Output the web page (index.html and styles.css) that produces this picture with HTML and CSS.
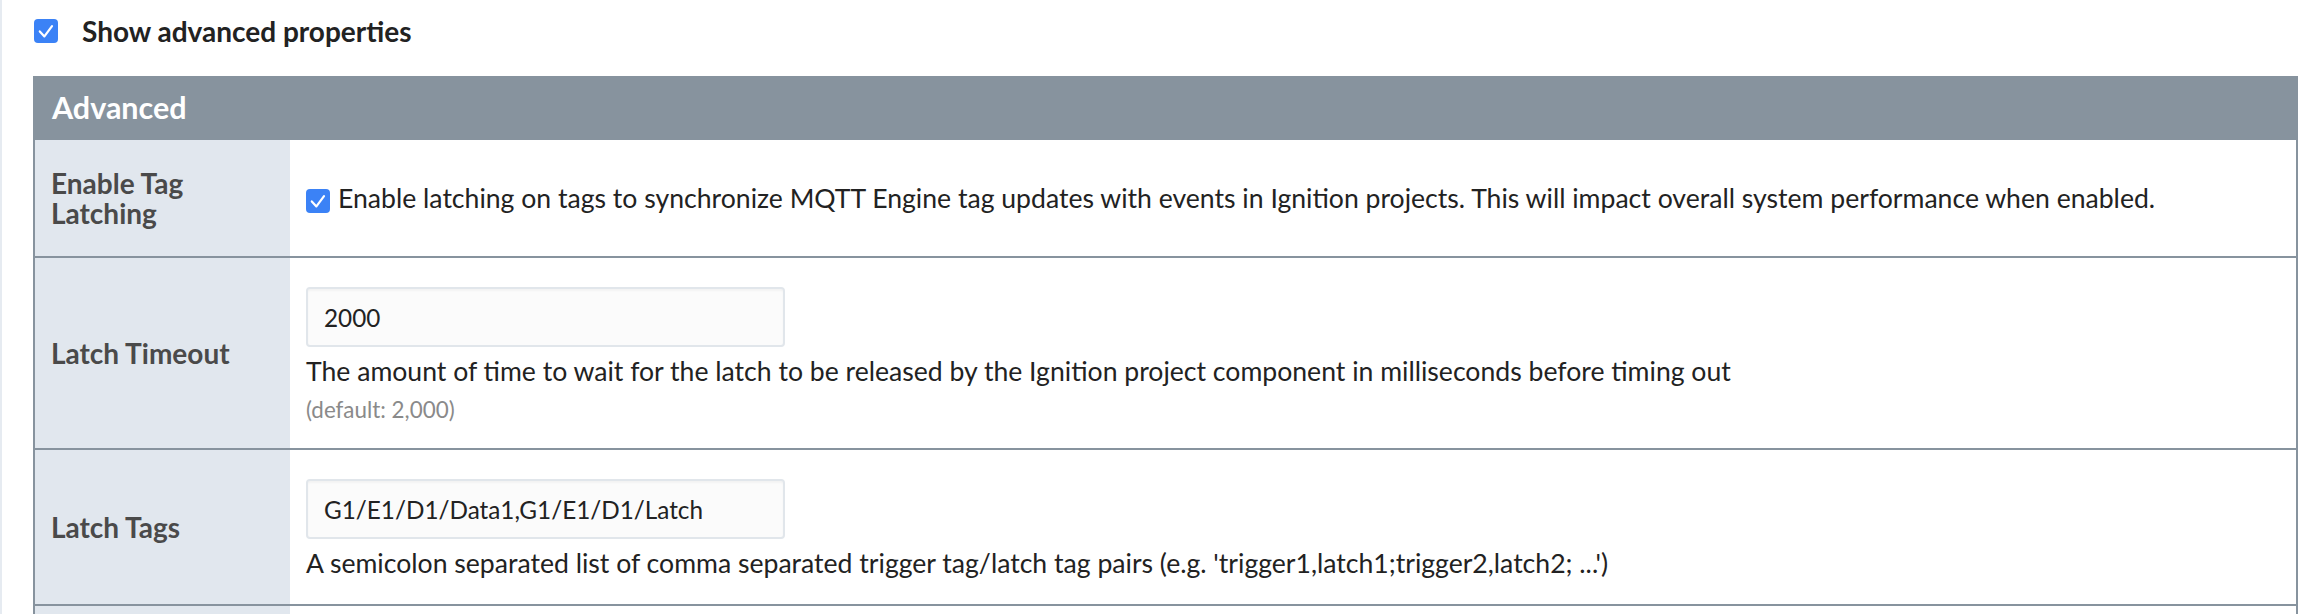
FILE: index.html
```html
<!DOCTYPE html>
<html lang="en">
<head>
<meta charset="utf-8">
<title>Advanced properties</title>
<link rel="stylesheet" href="styles.css">
</head>
<body>
<div class="page">
  <label class="toggle">
    <svg class="cb" viewBox="0 0 24 24" width="24" height="24" aria-hidden="true"><rect width="24" height="24" rx="4" fill="#3b82f6"/><path d="M5.8 12.4 L10.4 17.4 L18 7.2" fill="none" stroke="#fff" stroke-width="2.2" stroke-linecap="round" stroke-linejoin="round"/></svg>
    <span>Show advanced properties</span>
  </label>

  <section class="panel">
    <header class="panel-head">Advanced</header>

    <div class="row">
      <div class="label label-tall">Enable Tag<br>Latching</div>
      <div class="value value-inline">
        <svg class="cb cb-inline" viewBox="0 0 24 24" width="24" height="24" aria-hidden="true"><rect width="24" height="24" rx="4" fill="#3b82f6"/><path d="M5.8 12.4 L10.4 17.4 L18 7.2" fill="none" stroke="#fff" stroke-width="2.2" stroke-linecap="round" stroke-linejoin="round"/></svg>
        <span>Enable latching on tags to synchronize MQTT Engine tag updates with events in Ignition projects. This will impact overall system performance when enabled.</span>
      </div>
    </div>

    <div class="row">
      <div class="label">Latch Timeout</div>
      <div class="value">
        <input class="field" type="text" value="2000" readonly>
        <div class="desc">The amount of time to wait for the latch to be released by the Ignition project component in milliseconds before timing out</div>
        <div class="default">(default: 2,000)</div>
      </div>
    </div>

    <div class="row">
      <div class="label">Latch Tags</div>
      <div class="value">
        <input class="field" type="text" value="G1/E1/D1/Data1,G1/E1/D1/Latch" readonly>
        <div class="desc">A semicolon separated list of comma separated trigger tag/latch tag pairs (e.g. 'trigger1,latch1;trigger2,latch2; ...')</div>
      </div>
    </div>

    <div class="row row-more">
      <div class="label"></div>
      <div class="value"></div>
    </div>
  </section>
</div>
</body>
</html>
```

FILE: styles.css
```css
* { box-sizing: border-box; }

html, body {
  margin: 0;
  height: 100%;
}

body {
  font-family: Lato, "Noto Sans", sans-serif;
  color: #222;
  background: #fff;
  overflow: hidden;
}

.page {
  min-height: 100vh;
  border-left: 2px solid #e6ebf1;
  padding: 19px 24px 0 31px;
}

.toggle {
  display: flex;
  align-items: center;
  gap: 24px;
  height: 24px;
  margin: 0 0 33px 1px;
  font-size: 28px;
  font-weight: 700;
  color: #222;
}

.cb {
  flex: 0 0 24px;
  display: block;
}

.cb-inline {
  margin-top: 6px;
}

.panel {
  border-left: 2px solid #87939e;
  border-right: 2px solid #87939e;
}

.panel-head {
  height: 64px;
  display: flex;
  align-items: center;
  padding: 0 0 3px 17px;
  background: #87939e;
  color: #fff;
  font-size: 30.5px;
  font-weight: 700;
}

.row {
  display: flex;
  border-bottom: 2px solid #87939e;
}

.label {
  flex: 0 0 255px;
  display: flex;
  align-items: center;
  padding: 0 16px;
  background: #e1e7ee;
  color: #4a4a4a;
  font-size: 28px;
  font-weight: 700;
  line-height: 30px;
}

.label-tall {
  display: block;
  padding-top: 28px;
  padding-bottom: 28px;
}

.value {
  flex: 1;
  padding: 29px 16px 22px;
  font-size: 26.6px;
}

.value-inline {
  display: flex;
  align-items: center;
  gap: 8px;
  padding-top: 0;
  padding-bottom: 0;
  line-height: 38px;
}

.field {
  display: block;
  width: 479px;
  height: 60px;
  margin: 0 0 5px;
  padding: 0 16px;
  border: 2px solid #e1e6eb;
  border-radius: 4px;
  background: #fbfbfb;
  box-shadow: inset 0 2px 2px rgba(0, 0, 0, 0.035);
  font: inherit;
  font-size: 24.3px;
  color: #222;
  outline: none;
}

.desc {
  line-height: 38px;
}

.default {
  margin-top: 4px;
  font-size: 22.4px;
  line-height: 32px;
  color: #8a8a8a;
}

.row-more {
  height: 120px;
  border-bottom: none;
}
```
